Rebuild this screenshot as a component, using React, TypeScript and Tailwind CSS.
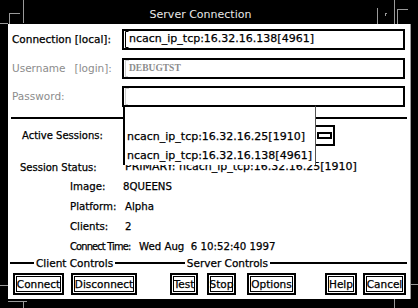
import React from 'react'

const Cursor = ({ dim = false }: { dim?: boolean }) => (
  <svg width="4" height="17" viewBox="0 0 4 17" className="shrink-0">
    <path
      d="M3.5 0.5H0.5V16.5H3.5"
      fill="none"
      stroke={dim ? '#9a9a9a' : '#000'}
      strokeWidth="1"
      strokeDasharray={dim ? '1 1' : undefined}
    />
  </svg>
)

const Btn = ({ label, className }: { label: string; className: string }) => (
  <div className={`${className} h-[22px] border-2 border-black p-px`}>
    <div className="h-full border border-black flex items-center justify-center leading-none text-[10.5px]">{label}</div>
  </div>
)

const Line = ({ className }: { className: string }) => <div className={`${className} h-[2px] bg-black`} />

const App: React.FC = () => {
  return (
    <div className="relative w-[418px] h-[308px] bg-black overflow-hidden font-['DejaVu_Sans',sans-serif] text-[10.5px] text-black [-webkit-text-stroke:0.25px]">
      {/* window frame decorations */}
      <div className="absolute left-[23px] top-0 w-px h-[23px] bg-[#9a9a9a]" />
      <div className="absolute left-0 top-[23px] w-[8px] h-px bg-[#9a9a9a]" />
      <div className="absolute left-[9px] top-[13px] w-[11px] h-px bg-[#9a9a9a]" />
      <div className="absolute left-[9px] top-[13px] w-px h-[11px] bg-[#9a9a9a]" />
      <div className="absolute left-[377px] top-[8px] w-px h-[16px] bg-[#9a9a9a]" />
      <div className="absolute left-[385px] top-[13px] w-[2px] h-px bg-[#9a9a9a]" />
      <div className="absolute left-[385px] top-[13px] w-px h-[3px] bg-[#9a9a9a]" />
      <div className="absolute left-[394px] top-0 w-px h-[30px] bg-[#9a9a9a]" />
      <div className="absolute left-[397px] top-[9px] w-[11px] h-px bg-[#9a9a9a]" />
      <div className="absolute left-[397px] top-[9px] w-px h-[15px] bg-[#9a9a9a]" />
      <div className="absolute left-[410px] top-[24px] w-px h-[275px] bg-[#9a9a9a]" />
      <div className="absolute left-0 top-[285px] w-[8px] h-px bg-[#9a9a9a]" />
      <div className="absolute left-[410px] top-[284px] w-[8px] h-px bg-[#9a9a9a]" />
      <div className="absolute left-[8px] top-[301px] w-[19px] h-px bg-[#9a9a9a]" />
      <div className="absolute left-[23px] top-[301px] w-px h-[7px] bg-[#9a9a9a]" />
      <div className="absolute left-[394px] top-[299px] w-px h-[9px] bg-[#9a9a9a]" />

      {/* title bar */}
      <div className="h-[24px] flex items-center pl-[24px] pr-[41px]">
        <div className="flex-1 text-center text-[11px] text-[#e8e8e8] [-webkit-text-stroke:0px] pt-[5px] leading-none">Server Connection</div>
      </div>

      {/* client area */}
      <div className="relative ml-[8px] w-[402px] h-[275px] bg-white flex flex-col">
        <div className="mt-[5px] flex items-center h-[21px]">
          <div className="w-[114px] pl-[4px]">Connection [local]:</div>
          <div className="w-[283px] h-[21px] border-2 border-black flex items-center pl-px text-[11px]">
            <Cursor />
            <span>ncacn_ip_tcp:16.32.16.138[4961]</span>
          </div>
        </div>

        <div className="mt-[8px] flex items-center h-[21px]">
          <div className="w-[114px] pl-[4px] text-[#8c8c8c] [-webkit-text-stroke:0px]">
            Username<span className="pl-[9px]">[login]:</span>
          </div>
          <div className="w-[283px] h-[21px] border-2 border-black flex items-center pl-px">
            <Cursor dim />
            <span className="font-['Liberation_Serif',serif] text-[9.5px] font-bold text-[#8c8c8c] [-webkit-text-stroke:0px]">DEBUGTST</span>
          </div>
        </div>

        <div className="mt-[7px] flex items-center h-[21px]">
          <div className="w-[114px] pl-[4px] text-[#8c8c8c] [-webkit-text-stroke:0px]">Password:</div>
          <div className="w-[283px] h-[21px] border-2 border-black flex items-center pl-px">
            <Cursor dim />
          </div>
        </div>

        <Line className="mt-[10px] mx-[3px]" />

        <div className="mt-[6px] flex items-center h-[21px]">
          <div className="w-[116px] pl-[14px] text-[10px]">Active Sessions:</div>
          <div className="w-[211px] h-[21px] border-2 border-black flex items-center justify-end pr-px">
            <div className="w-[15px] h-[7px] border-2 border-black" />
          </div>
        </div>

        <div className="mt-[11px] flex items-center h-[20px]">
          <div className="w-[117px] pl-[12px] text-[10px]">Session Status:</div>
          <div className="text-[11px]">PRIMARY: ncacn_ip_tcp:16.32.16.25[1910]</div>
        </div>

        <div className="flex items-center h-[20px] pl-[62px] text-[10.2px]">
          <div className="w-[53px]">Image:</div>
          <div>8QUEENS</div>
        </div>
        <div className="flex items-center h-[20px] pl-[62px] text-[10.2px]">
          <div className="w-[55px]">Platform:</div>
          <div>Alpha</div>
        </div>
        <div className="flex items-center h-[20px] pl-[62px] text-[10.2px]">
          <div className="w-[55px]">Clients:</div>
          <div>2</div>
        </div>
        <div className="flex items-center h-[20px] pl-[62px] text-[10.2px]">
          <div className="w-[69px] whitespace-nowrap text-[9.8px] tracking-[-0.8px]">Connect Time:</div>
          <div className="whitespace-pre">Wed Aug  6 10:52:40 1997</div>
        </div>

        <div className="flex items-center h-[12px]">
          <Line className="ml-[2px] w-[24px]" />
          <div className="px-[2px] leading-none">Client Controls</div>
          <Line className="flex-1" />
          <div className="px-[2px] leading-none">Server Controls</div>
          <Line className="w-[137px] mr-[3px]" />
        </div>

        <div className="mt-[4px] flex">
          <Btn label="Connect" className="ml-[5px] w-[51px]" />
          <Btn label="Disconnect" className="ml-[7px] w-[66px]" />
          <Btn label="Test" className="ml-[33px] w-[28px]" />
          <Btn label="Stop" className="ml-[9px] w-[29px]" />
          <Btn label="Options" className="ml-[11px] w-[49px]" />
          <Btn label="Help" className="ml-[29px] w-[32px]" />
          <Btn label="Cancel" className="ml-[6px] w-[43px]" />
        </div>

        {/* open sessions dropdown */}
        <div className="absolute left-[115px] top-[81px] w-[193px] h-[60px] bg-white border-t-2 border-l-2 border-r border-t-black border-l-black border-r-[#555] flex flex-col text-[11px]">
          <div className="h-[21px]" />
          <div className="h-[19px] flex items-center pl-[2px]">ncacn_ip_tcp:16.32.16.25[1910]</div>
          <div className="h-[18px] flex items-center pl-[2px]">ncacn_ip_tcp:16.32.16.138[4961]</div>
        </div>
      </div>
    </div>
  )
}

export default App
